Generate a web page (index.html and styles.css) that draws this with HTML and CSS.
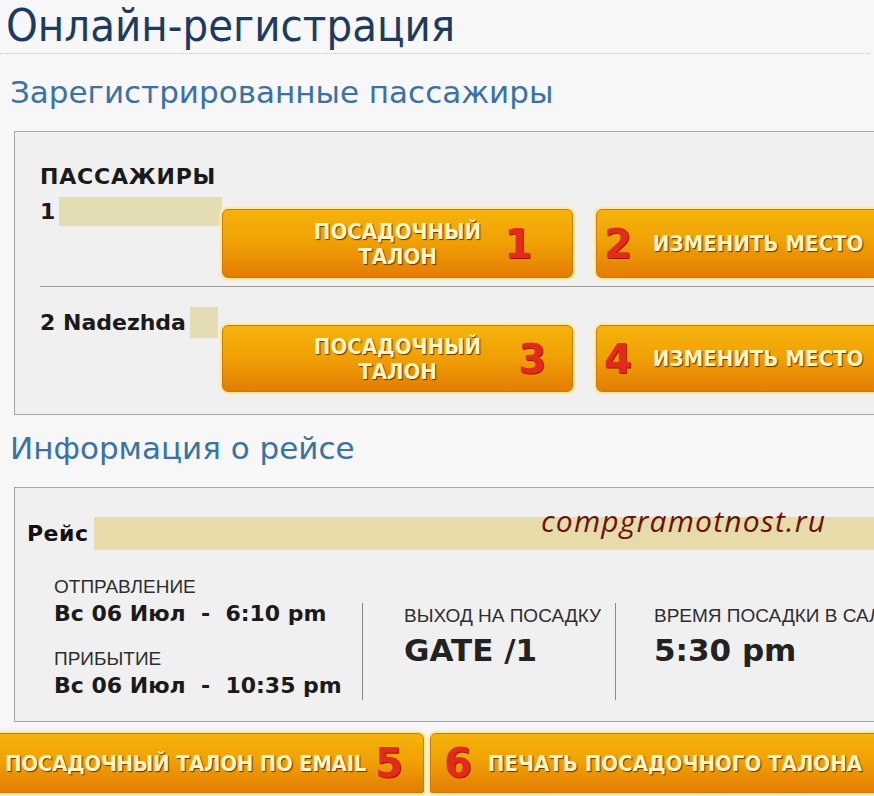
FILE: index.html
```html
<!DOCTYPE html>
<html lang="ru">
<head>
<meta charset="utf-8">
<title>Онлайн-регистрация</title>
<link rel="stylesheet" href="styles.css">
</head>
<body>
<div class="page">
  <h1 class="title">Онлайн-регистрация</h1>
  <h2 class="subhead sub-pax">Зарегистрированные пассажиры</h2>

  <section class="panel pax-panel">
    <div class="pax-head">ПАССАЖИРЫ</div>

    <div class="pax-row r1">
      <div class="pax-name"><span>1</span><span class="mask mask-long"></span></div>
      <div class="btns">
        <div class="btn btn-board"><span class="btn-label">ПОСАДОЧНЫЙ<br>ТАЛОН</span><span class="num num-1">1</span></div>
        <div class="btn btn-seat"><span class="num">2</span><span class="btn-label">ИЗМЕНИТЬ МЕСТО</span></div>
      </div>
    </div>

    <div class="pax-row r2">
      <div class="pax-name"><span>2 Nadezhda</span><span class="mask mask-short"></span></div>
      <div class="btns">
        <div class="btn btn-board"><span class="btn-label">ПОСАДОЧНЫЙ<br>ТАЛОН</span><span class="num num-3">3</span></div>
        <div class="btn btn-seat"><span class="num">4</span><span class="btn-label">ИЗМЕНИТЬ МЕСТО</span></div>
      </div>
    </div>
  </section>

  <h2 class="subhead sub-flight">Информация о рейсе</h2>

  <section class="panel flight-panel">
    <div class="flight-row">
      <span class="flight-label">Рейс</span>
      <span class="mask mask-bar"></span>
    </div>
    <div class="watermark">compgramotnost.ru</div>

    <div class="details">
      <div class="col col-times">
        <div class="lbl">ОТПРАВЛЕНИЕ</div>
        <div class="val">Вс 06 Июл&nbsp; -&nbsp; 6:10 pm</div>
        <div class="lbl lbl-second">ПРИБЫТИЕ</div>
        <div class="val">Вс 06 Июл&nbsp; -&nbsp; 10:35 pm</div>
      </div>
      <div class="col col-gate">
        <div class="lbl">ВЫХОД НА ПОСАДКУ</div>
        <div class="val-big">GATE /1</div>
      </div>
      <div class="col col-board">
        <div class="lbl">ВРЕМЯ ПОСАДКИ В САЛОН</div>
        <div class="val-big">5:30 pm</div>
      </div>
    </div>
  </section>

  <div class="bottom-btns">
    <div class="btn bbtn bbtn-email"><span class="btn-label">ПОСАДОЧНЫЙ ТАЛОН ПО EMAIL</span><span class="num">5</span></div>
    <div class="btn bbtn bbtn-print"><span class="num">6</span><span class="btn-label">ПЕЧАТЬ ПОСАДОЧНОГО ТАЛОНА</span></div>
  </div>
</div>
</body>
</html>
```

FILE: styles.css
```css
* { box-sizing: border-box; }

html, body {
  margin: 0;
  padding: 0;
}

body {
  background: #f7f7f7;
  width: 874px;
  height: 796px;
  overflow: hidden;
  font-family: "DejaVu Sans", sans-serif;
  color: #1a1a1a;
}

.page {
  width: 874px;
  height: 796px;
  overflow: hidden;
}

.title {
  margin: 0 4px 0 0;
  padding: 2px 0 3px 6px;
  font: normal 45px/48px "DejaVu Sans Condensed", "DejaVu Sans", sans-serif;
  color: #1d3b5f;
  border-bottom: 1px dotted #c2c2c2;
}

.subhead {
  margin: 0;
  padding-left: 10px;
  font: normal 31px/36px "DejaVu Sans", sans-serif;
  color: #3b72a4;
}

.sub-pax { margin: 20px 0 21px; }
.sub-flight { margin: 15px 0 21px; }

.panel {
  margin-left: 14px;
  width: 900px;
  border: 1px solid #a6a6a6;
  background: #f0f0f0;
}

/* passengers */
.pax-panel {
  padding: 33px 0 22px 25px;
}

.pax-head {
  font: bold 22px/24px "DejaVu Sans", sans-serif;
  letter-spacing: 0.8px;
  color: #1a1a1a;
}

.pax-row {
  display: flex;
  align-items: flex-start;
}

.pax-row.r1 {
  padding-bottom: 8px;
  border-bottom: 1px solid #9c9c9c;
}

.pax-name {
  width: 182px;
  flex-shrink: 0;
  display: flex;
  align-items: center;
  gap: 4px;
  font: bold 22px/24px "DejaVu Sans", sans-serif;
  color: #1a1a1a;
}

.r1 .pax-name { margin-top: 8px; height: 29px; }
.r2 .pax-name { margin-top: 20px; height: 31px; }

.mask {
  display: block;
  background: #e4dcb3;
  filter: blur(0.6px);
}

.mask-long { width: 164px; height: 29px; }
.mask-short { width: 28px; height: 31px; }

.btns {
  display: flex;
  gap: 23px;
}

.r1 .btns { margin-top: 20px; }
.r2 .btns { margin-top: 38px; }

.btn {
  position: relative;
  display: flex;
  align-items: center;
  background: linear-gradient(#f4b30a 0%, #f1a205 45%, #e88a04 80%, #e47c05 100%);
  border: 1px solid #c97a0c;
  border-radius: 6px;
  box-shadow: 0 0 0 2px #fde9a2, 0 0 4px 2px #fdeec0;
  color: #fff4c2;
  font: bold 22px/25px "DejaVu Sans Condensed", "DejaVu Sans", sans-serif;
  text-shadow: 1px 1px 1px #5e3800;
  white-space: nowrap;
}

.pax-row .btn { width: 351px; }
.r1 .btn { height: 69px; }
.r2 .btn { height: 67px; }

.btn-board {
  justify-content: center;
  text-align: center;
}

.btn-seat {
  padding-left: 7px;
  gap: 21px;
}

.num {
  font: bold 40px/1 "DejaVu Sans", sans-serif;
  color: #e12b1d;
  text-shadow: 1px 1px 0 #a3150c;
}

.btn-board .num {
  position: absolute;
  top: 50%;
  transform: translateY(-50%);
}

.num-1 { right: 40px; }
.num-3 { right: 26px; }

/* flight */
.flight-panel {
  position: relative;
  padding: 29px 0 21px 12px;
}

.flight-row {
  display: flex;
  align-items: center;
  gap: 5px;
}

.flight-label {
  font: bold 22px/26px "DejaVu Sans", sans-serif;
  letter-spacing: 0.5px;
  color: #111;
}

.mask-bar {
  flex: 1;
  height: 33px;
  background: #e7dca9;
}

.watermark {
  position: absolute;
  left: 526px;
  top: 12px;
  font: italic 30px "Open Sans", "DejaVu Sans", sans-serif;
  letter-spacing: 1.2px;
  color: #6a1212;
  white-space: nowrap;
}

.details {
  display: flex;
  align-items: flex-end;
  margin-top: 26px;
  padding-left: 27px;
}

.col {
  white-space: nowrap;
}

.col-times {
  width: 308px;
  flex-shrink: 0;
  padding-bottom: 1px;
}

.col-gate {
  width: 253px;
  flex-shrink: 0;
  height: 97px;
  border-left: 1px solid #8a8a8a;
  padding: 2px 14px 0 41px;
  overflow: hidden;
}

.col-board {
  height: 97px;
  flex-shrink: 0;
  border-left: 1px solid #8a8a8a;
  padding: 2px 0 0 38px;
}

.lbl {
  font: normal 19px/21px "Liberation Sans", Arial, sans-serif;
  color: #2e2e2e;
  overflow: hidden;
}

.lbl-second { margin-top: 21px; }

.val {
  margin-top: 4px;
  font: bold 22px/26px "DejaVu Sans", sans-serif;
  color: #1a1a1a;
}

.val-big {
  margin-top: 6px;
  font: bold 31px/36px "DejaVu Sans", sans-serif;
  color: #222;
}

/* bottom buttons */
.bottom-btns {
  display: flex;
  gap: 6px;
  margin: 11px 0 0 -8px;
}

.bbtn {
  flex-shrink: 0;
  height: 60px;
  border-radius: 6px 6px 2px 2px;
}

.bbtn-email {
  width: 432px;
  padding-left: 12px;
  gap: 9px;
  letter-spacing: -0.3px;
}

.bbtn-print {
  width: 460px;
  padding-left: 13px;
  gap: 16px;
}
```
